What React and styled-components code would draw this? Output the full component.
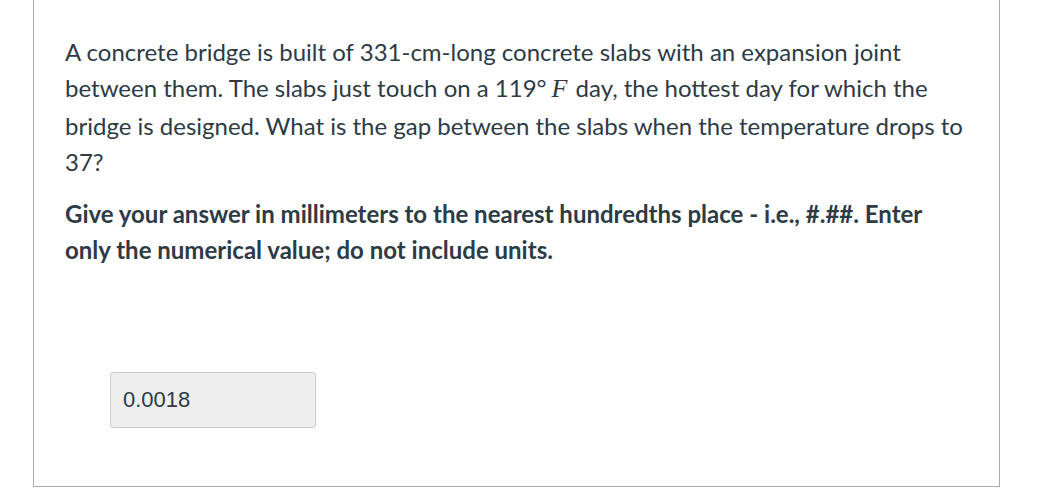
import React from 'react';
import styled, { createGlobalStyle } from 'styled-components';

const GlobalStyle = createGlobalStyle`
   html, body {
      margin: 0;
      padding: 0;
      background: #ffffff;
   }
   body {
      font-family: Lato, 'Liberation Sans', sans-serif;
      color: #2d3b45;
   }
`;

const Card = styled.section`
   margin-left: 33px;
   width: 967px;
   box-sizing: border-box;
   border: 1px solid #aaaaaa;
   border-top: none;
   padding: 34px 32px 58px 31px;
`;

const Question = styled.p`
   margin: 0;
   font-size: 24px;
   line-height: 36.3px;
   font-weight: ${(p) => (p.$bold ? 700 : 400)};

   & + & {
      margin-top: 16px;
   }
`;

const MathVar = styled.span`
   font-family: 'Liberation Serif', 'DejaVu Serif', serif;
   font-style: italic;
   font-size: 26px;
   margin-left: 5px;
   margin-right: 2px;
`;

const AnswerRow = styled.div`
   margin-top: 103px;
   padding-left: 45px;
`;

const AnswerBox = styled.div`
   width: 206px;
   height: 56px;
   box-sizing: border-box;
   background: #eeeeee;
   border: 1px solid #cccccc;
   border-radius: 3px;
   display: flex;
   align-items: center;
   padding: 0 12px;
   font-family: 'Liberation Sans', Arial, sans-serif;
   font-size: 22px;
   color: #2d3b45;
`;

export default function App() {
   return (
      <>
         <GlobalStyle />
         <Card>
            <Question>
               A concrete bridge is built of 331-cm-long concrete slabs with an expansion joint
               between them. The slabs just touch on a 119°<MathVar>F</MathVar> day, the hottest
               day for which the bridge is designed. What is the gap between the slabs when the
               temperature drops to 37?
            </Question>
            <Question $bold>
               Give your answer in millimeters to the nearest hundredths place - i.e., #.##. Enter
               only the numerical value; do not include units.
            </Question>
            <AnswerRow>
               <AnswerBox>0.0018</AnswerBox>
            </AnswerRow>
         </Card>
      </>
   );
}
